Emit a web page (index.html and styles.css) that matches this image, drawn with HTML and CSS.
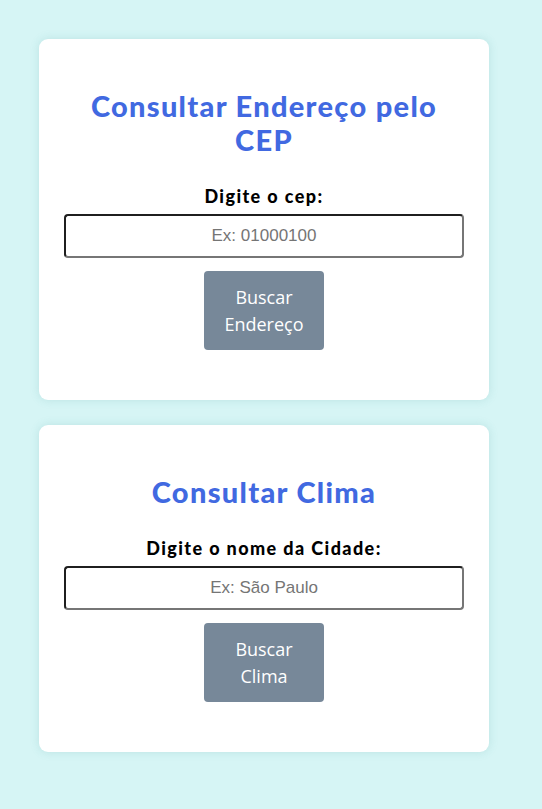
FILE: index.html
```
<!DOCTYPE html>
<html lang="pt-BR">
<head>
<meta charset="utf-8">
<title>Consultas</title>
<link rel="stylesheet" href="styles.css">
</head>
<body>
<main class="page">
  <section class="card">
    <h2 class="card-title">Consultar Endereço pelo CEP</h2>
    <label class="field-label" for="cep">Digite o cep:</label>
    <input class="field-input" id="cep" type="text" placeholder="Ex: 01000100">
    <button class="btn" type="button">Buscar Endereço</button>
  </section>
  <section class="card">
    <h2 class="card-title">Consultar Clima</h2>
    <label class="field-label" for="cidade">Digite o nome da Cidade:</label>
    <input class="field-input" id="cidade" type="text" placeholder="Ex: São Paulo">
    <button class="btn" type="button">Buscar Clima</button>
  </section>
</main>
</body>
</html>
```
FILE: styles.css
```
html, body {
  margin: 0;
  padding: 0;
}
body {
  background: #d6f5f5;
  min-height: 809px;
  font-family: "Lato", "Liberation Sans", sans-serif;
}
.page {
  display: flex;
  flex-direction: column;
  gap: 25px;
  padding: 39px 0 0 39px;
}
.card {
  width: 450px;
  box-sizing: border-box;
  background: #ffffff;
  border-radius: 9px;
  box-shadow: 0 0 10px rgba(60, 150, 150, 0.18);
  padding: 50px 25px 50px;
  display: flex;
  flex-direction: column;
  align-items: center;
}
.card-title {
  margin: 0;
  font-size: 29px;
  line-height: 34px;
  font-weight: 900;
  letter-spacing: 1.3px;
  color: #4169e1;
  text-align: center;
  padding: 0 2px;
}
.field-label {
  margin-top: 28px;
  font-size: 18px;
  line-height: 22px;
  font-weight: 900;
  letter-spacing: 1.4px;
  color: #000;
}
.field-input {
  margin-top: 7px;
  width: 400px;
  height: 44px;
  box-sizing: border-box;
  border: 2px solid #767676;
  border-top-color: #1f1f1f;
  border-left-color: #1f1f1f;
  border-radius: 4px;
  font-family: "Liberation Sans", Arial, sans-serif;
  font-size: 17px;
  text-align: center;
  padding: 0 8px;
  background: #fff;
}
.field-input::placeholder {
  color: #757575;
}
.btn {
  margin-top: 13px;
  width: 120px;
  height: 79px;
  box-sizing: border-box;
  border: none;
  border-radius: 4px;
  background: #778899;
  color: #fff;
  font-family: "Open Sans", "Noto Sans", sans-serif;
  font-size: 18px;
  line-height: 27px;
  padding: 0 6px;
}
```
